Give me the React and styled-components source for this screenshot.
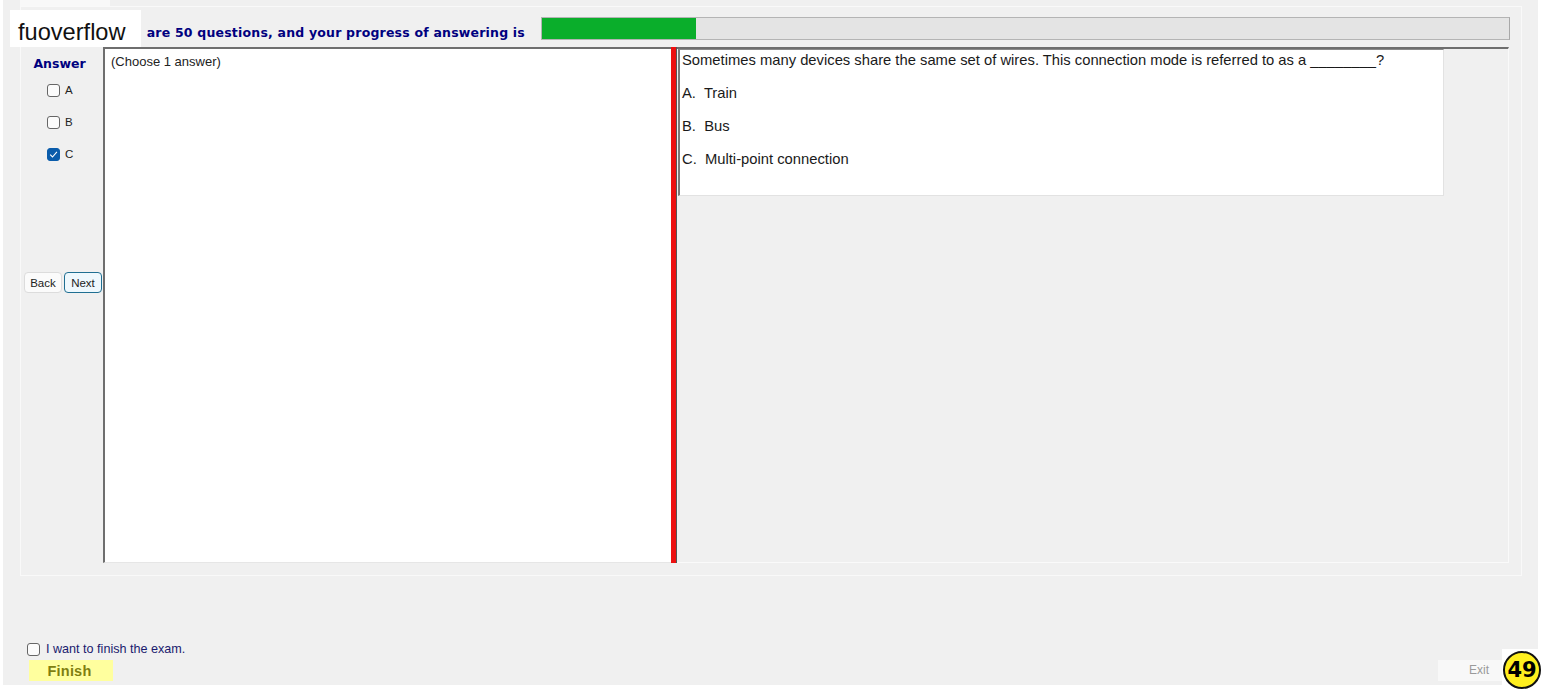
import React from 'react'
import styled, { createGlobalStyle } from 'styled-components'

const GlobalStyle = createGlobalStyle`
  html, body {
    margin: 0;
    padding: 0;
    background: #fff;
    overflow: hidden;
  }
  body {
    font-family: "Liberation Sans", Arial, sans-serif;
  }
`

const Page = styled.div`
  position: relative;
  width: 1542px;
  height: 690px;
  overflow: hidden;
`

const Frame = styled.div`
  margin-left: 3px;
  width: 1535px;
  height: 685px;
  background: #f0f0f0;
  display: flex;
  flex-direction: column;
`

const Tab = styled.div`
  margin-left: 17px;
  width: 90px;
  height: 6px;
  background: #f8f8f8;
  flex: none;
`

const TabPanel = styled.div`
  margin-left: 17px;
  width: 1502px;
  height: 570px;
  box-sizing: border-box;
  border: 1px solid #f9f9f9;
  padding: 10px 11px 0 2px;
  flex: none;
`

const ProgressRow = styled.div`
  height: 23px;
  display: flex;
  align-items: flex-start;
  justify-content: flex-end;
  gap: 16px;
  margin-bottom: 7px;
`

const ProgressText = styled.div`
  margin-top: 8px;
  font-family: "DejaVu Sans", Verdana, sans-serif;
  font-size: 12.5px;
  letter-spacing: 0.2px;
  line-height: 15px;
  font-weight: 700;
  color: #00007f;
  white-space: nowrap;
`

const ProgressTrack = styled.div`
  width: 969px;
  height: 23px;
  box-sizing: border-box;
  background: #e4e4e4;
  border: 1px solid #b4b4b4;
  border-right-color: #a8a8a8;
`

const ProgressFill = styled.div`
  height: 100%;
  background: #0aae2b;
`

const Split = styled.div`
  display: flex;
  height: 516px;
`

const AnswerCol = styled.div`
  width: 80px;
  flex: none;
  display: flex;
  flex-direction: column;
`

const AnswerTitle = styled.div`
  margin-top: 9px;
  text-align: center;
  padding-right: 7px;
  font-family: "DejaVu Sans", Verdana, sans-serif;
  font-size: 12.5px;
  font-weight: 700;
  color: #00007f;
  height: 16px;
  line-height: 16px;
`

const Options = styled.div`
  display: flex;
  flex-direction: column;
  gap: 16px;
  margin-top: 10px;
  padding-left: 24px;
`

const OptionRow = styled.div`
  display: flex;
  align-items: center;
  gap: 5px;
  height: 16px;
  font-size: 11.5px;
  color: #222;
`

const Box = styled.span`
  display: flex;
  align-items: center;
  justify-content: center;
  width: 13px;
  height: 13px;
  box-sizing: border-box;
  border: 1px solid ${({ $checked }) => ($checked ? '#0a5cab' : '#666')};
  border-radius: 3px;
  background: ${({ $checked }) => ($checked ? '#0a5cab' : '#fbfbfb')};
  flex: none;
`

const NavRow = styled.div`
  display: flex;
  gap: 2px;
  margin-top: 110px;
  padding-left: 1px;
`

const NavButton = styled.div`
  width: 38px;
  height: 21px;
  box-sizing: border-box;
  display: flex;
  align-items: center;
  justify-content: center;
  font-size: 11.5px;
  color: #222;
  border-radius: 4px;
  background: ${({ $primary }) => ($primary ? '#eef8fd' : '#fbfbfb')};
  border: ${({ $primary }) => ($primary ? '1px solid #1f6f92' : '1px solid #dcdcdc')};
`

const LeftPane = styled.div`
  width: 568px;
  flex: none;
  box-sizing: border-box;
  background: #fff;
  border-top: 2px solid #6e6e6e;
  border-left: 2px solid #6e6e6e;
  border-bottom: 1px solid #e6e6e6;
  padding: 5px 6px;
  font-size: 13px;
  color: #222;
`

const Splitter = styled.div`
  width: 6px;
  flex: none;
  background: #ec1111;
  border-right: 1px solid #555;
  box-sizing: border-box;
`

const RightPane = styled.div`
  width: 832px;
  flex: none;
  box-sizing: border-box;
  border-top: 2px solid #6e6e6e;
  border-right: 1px solid #fafafa;
  border-bottom: 1px solid #fafafa;
  padding-left: 1px;
`

const QuestionBox = styled.div`
  width: 766px;
  height: 147px;
  box-sizing: border-box;
  background: #fff;
  border-top: 1px solid #8a8a8a;
  border-left: 2px solid #7a7a7a;
  border-right: 1px solid #e2e2e2;
  border-bottom: 1px solid #e2e2e2;
  padding-left: 2px;
  font-size: 14.78px;
  color: #1a1a1a;
`

const QuestionLine = styled.div`
  height: 33px;
  line-height: 20px;
  white-space: pre;
`

const Footer = styled.div`
  flex: 1;
  display: flex;
  flex-direction: column;
  justify-content: flex-end;
  padding: 0 34px 4px 24px;
`

const FinishRow = styled.div`
  display: flex;
  align-items: center;
  gap: 6px;
  margin-bottom: 4px;
  font-size: 12.6px;
  color: #1a1a6e;
`

const FooterBar = styled.div`
  display: flex;
  justify-content: space-between;
  align-items: center;
`

const FinishButton = styled.div`
  margin-left: 2px;
  width: 84px;
  height: 21px;
  background: #ffff9e;
  color: #7f7f10;
  font-size: 14.5px;
  font-weight: 700;
  letter-spacing: 0.2px;
  box-sizing: border-box;
  padding-right: 3px;
  text-align: center;
  line-height: 22px;
`

const ExitButton = styled.div`
  width: 66px;
  height: 21px;
  margin-top: -1px;
  background: #f8f8f8;
  color: #9a9a9a;
  font-size: 12px;
  box-sizing: border-box;
  padding-right: 15px;
  text-align: right;
  line-height: 21px;
`

const Logo = styled.div`
  position: absolute;
  left: 10px;
  top: 10px;
  width: 131px;
  height: 37px;
  background: #fff;
  box-sizing: border-box;
  padding-left: 8px;
  font-size: 23.6px;
  line-height: 44px;
  color: #111;
`

const Badge = styled.div`
  position: absolute;
  right: 0;
  bottom: 0;
  width: 40px;
  height: 41px;
  background: #fff;
  display: flex;
  align-items: center;
  justify-content: center;
`

const BadgeCircle = styled.div`
  width: 38px;
  height: 38px;
  box-sizing: border-box;
  border: 2px solid #111;
  border-radius: 50%;
  background: #ffef1f;
  color: #000;
  font-family: "DejaVu Sans", sans-serif;
  font-size: 21px;
  font-weight: 700;
  display: flex;
  align-items: center;
  justify-content: center;
`

const Check = () => (
  <svg width="9" height="9" viewBox="0 0 9 9" fill="none">
    <path d="M1.2 4.6 3.5 7 7.9 1.8" stroke="#fff" strokeWidth="1.1" />
  </svg>
)

const options = [
  { label: 'A', checked: false },
  { label: 'B', checked: false },
  { label: 'C', checked: true },
]

const lines = [
  'Sometimes many devices share the same set of wires. This connection mode is referred to as a ________?',
  'A.  Train',
  'B.  Bus',
  'C.  Multi-point connection',
]

const progress = 15.9

export default function App() {
  return (
    <Page>
      <GlobalStyle />
      <Frame>
        <Tab />
        <TabPanel>
          <ProgressRow>
            <ProgressText>are 50 questions, and your progress of answering is</ProgressText>
            <ProgressTrack>
              <ProgressFill style={{ width: `${progress}%` }} />
            </ProgressTrack>
          </ProgressRow>
          <Split>
            <AnswerCol>
              <AnswerTitle>Answer</AnswerTitle>
              <Options>
                {options.map((o) => (
                  <OptionRow key={o.label}>
                    <Box $checked={o.checked}>{o.checked && <Check />}</Box>
                    {o.label}
                  </OptionRow>
                ))}
              </Options>
              <NavRow>
                <NavButton>Back</NavButton>
                <NavButton $primary>Next</NavButton>
              </NavRow>
            </AnswerCol>
            <LeftPane>(Choose 1 answer)</LeftPane>
            <Splitter />
            <RightPane>
              <QuestionBox>
                {lines.map((l) => (
                  <QuestionLine key={l}>{l}</QuestionLine>
                ))}
              </QuestionBox>
            </RightPane>
          </Split>
        </TabPanel>
        <Footer>
          <FinishRow>
            <Box />
            I want to finish the exam.
          </FinishRow>
          <FooterBar>
            <FinishButton>Finish</FinishButton>
            <ExitButton>Exit</ExitButton>
          </FooterBar>
        </Footer>
      </Frame>
      <Logo>fuoverflow</Logo>
      <Badge>
        <BadgeCircle>49</BadgeCircle>
      </Badge>
    </Page>
  )
}
